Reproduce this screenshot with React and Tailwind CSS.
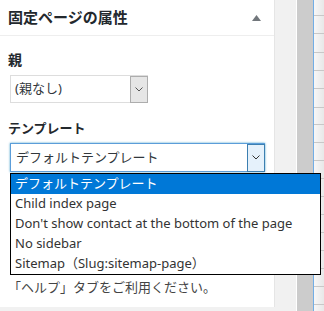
import React from "react";

const Chevron = ({ color = "#444" }) => (
  <svg width="8" height="5" viewBox="0 0 8 5">
    <path d="M0.5 0.5 L4 4 L7.5 0.5" fill="none" stroke={color} strokeWidth="1" />
  </svg>
);

export default function App() {
  const lines = [15, 33, 52, 70, 88, 107, 124, 142, 160, 178, 196, 214, 232, 250, 268, 286, 304];
  return (
    <div
      className="relative flex w-[324px] h-[311px] overflow-hidden bg-[#f1f1f1]"
      style={{ fontFamily: '"Noto Sans", "Noto Sans CJK JP", sans-serif' }}
    >
      {/* panel */}
      <div className="w-[275px] h-[307px] shrink-0 bg-white border-r border-[#e5e5e5]">
        <div className="h-[36px] flex items-center justify-between pl-[8px] pr-[13px] border-b border-[#eeeeee]">
          <span className="text-[15px] font-bold text-[#23282d] leading-none">固定ページの属性</span>
          <svg width="9" height="6" viewBox="0 0 9 6">
            <polygon points="4.5,0 9,6 0,6" fill="#72777c" />
          </svg>
        </div>
        <div className="pl-[8px] pr-[10px]">
          <div className="mt-[15px] h-[18px] flex items-center text-[14px] font-bold text-[#23282d] leading-none">親</div>
          <div className="mt-[6px] ml-[2px] w-[138px] h-[28px] border border-[#dddddd] flex items-center bg-white">
            <span className="flex-1 pl-[4px] text-[13px] text-[#32373c]">(親なし)</span>
            <div className="w-[18px] h-[27px] -mr-[1px] bg-[#e6e6e6] border border-[#adadad] flex items-center justify-center">
              <Chevron color="#555" />
            </div>
          </div>
          <div className="mt-[16px] h-[18px] flex items-center text-[13px] font-semibold text-[#23282d] leading-none">テンプレート</div>
          <div className="mt-[6px] ml-[2px] w-[255px] h-[29px] border border-[#5b9dd9] shadow-[0_0_2px_rgba(30,140,190,0.8)] flex items-center bg-white">
            <span className="flex-1 pl-[5px] text-[13px] text-[#32373c]">デフォルトテンプレート</span>
            <div className="w-[18px] h-[28px] -mr-[1px] bg-[#e5f1fb] border border-[#3c7fb1] flex items-center justify-center">
              <Chevron color="#333" />
            </div>
          </div>
          <p className="mt-[105px] text-[13px] leading-[20px] text-[#444]">「ヘルプ」タブをご利用ください。</p>
        </div>
      </div>
      {/* right background */}
      <div className="w-[21px] h-full bg-[#f1f1f1] shrink-0" />
      <div className="w-[1px] h-full bg-white shrink-0" />
      <div className="w-[16px] h-full bg-[#cccccc] shrink-0" />
      <div className="w-[1px] h-full bg-[#72aee6] shrink-0" />
      <div className="relative flex-1 h-full bg-gradient-to-r from-[#f7f7f7] to-[#e8e8e8]">
        {lines.map((y) => (
          <div key={y} className="absolute left-0 right-0 h-[1px] bg-[#c8c8c8]" style={{ top: y }} />
        ))}
      </div>

      {/* open dropdown list */}
      <div
        className="absolute left-[10px] top-[173px] w-[311px] h-[102px] bg-white border border-black text-[13px] text-[#000]"
        style={{ fontFamily: '"Noto Sans", "Noto Sans CJK JP", sans-serif' }}
      >
        <div className="h-[20px] flex items-center pl-[4px] bg-[#0078d7] text-white">デフォルトテンプレート</div>
        <div className="h-[20px] flex items-center pl-[4px] text-[#333]">Child index page</div>
        <div className="h-[20px] flex items-center pl-[4px] text-[#333]">Don't show contact at the bottom of the page</div>
        <div className="h-[20px] flex items-center pl-[4px] text-[#333]">No sidebar</div>
        <div className="h-[20px] flex items-center pl-[4px] text-[#333]">Sitemap（Slug:sitemap-page）</div>
      </div>
    </div>
  );
}
